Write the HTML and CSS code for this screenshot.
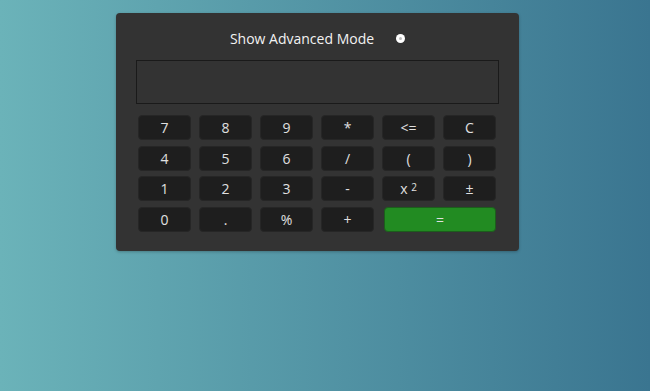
FILE: index.html
```html
<!DOCTYPE html>
<html lang="en">
<head>
  <meta charset="UTF-8">
  <meta name="viewport" content="width=device-width, initial-scale=1.0">
  <title>Calculator</title>
  <link rel="stylesheet" href="styles.css">
</head>
<body>

<div class="calculator">
  <div class="mode-row">
    <label for="advancedMode">Show Advanced Mode</label>
    <span id="advancedMode" class="toggle"></span>
  </div>

  <div class="display"></div>

  <div class="keys">
    <button class="key">7</button>
    <button class="key">8</button>
    <button class="key">9</button>
    <button class="key">*</button>
    <button class="key">&lt;=</button>
    <button class="key">C</button>

    <button class="key">4</button>
    <button class="key">5</button>
    <button class="key">6</button>
    <button class="key">/</button>
    <button class="key">(</button>
    <button class="key">)</button>

    <button class="key">1</button>
    <button class="key">2</button>
    <button class="key">3</button>
    <button class="key">-</button>
    <button class="key">x <sup>2</sup></button>
    <button class="key">±</button>

    <button class="key">0</button>
    <button class="key">.</button>
    <button class="key">%</button>
    <button class="key">+</button>
    <button class="key equals">=</button>
  </div>
</div>

</body>
</html>
```

FILE: styles.css
```css
body {
  font-family: "Open Sans", Arial, sans-serif;
  background: linear-gradient(to right, #6bb3b9, #3a7590);
  margin: 0;
  padding: 0;
  height: 391px;
  display: flex;
  flex-direction: column;
  align-items: center;
  color: #e6e6e6;
}

.calculator {
  width: 403px;
  box-sizing: border-box;
  margin-top: 13px;
  margin-left: -15px;
  background: #333333;
  border-radius: 4px;
  padding: 13px 20px 19px 20px;
  box-shadow: 0 1px 3px rgba(0, 0, 0, 0.25);
}

.mode-row {
  display: flex;
  justify-content: center;
  align-items: center;
  gap: 22px;
  height: 24px;
  font-size: 14px;
  color: #f2f2f2;
}

.toggle {
  width: 9px;
  height: 9px;
  border-radius: 50%;
  background: #fff;
  position: relative;
}

.toggle::after {
  content: "";
  position: absolute;
  left: 3px;
  top: 3px;
  width: 3px;
  height: 3px;
  border-radius: 50%;
  background: #bbb;
}

.display {
  margin-top: 10px;
  height: 42px;
  border: 1px solid #1a1a1a;
  background: #333333;
}

.keys {
  display: grid;
  grid-template-columns: repeat(6, 53px);
  grid-auto-rows: 25px;
  column-gap: 8px;
  row-gap: 5.5px;
  margin-top: 11px;
  padding-left: 2px;
}

.key {
  font-family: "Open Sans", Arial, sans-serif;
  font-size: 14px;
  color: #e0e0e0;
  background: #1e1e1e;
  border: 1px solid #262626;
  border-radius: 4px;
  padding: 0;
  cursor: pointer;
}

.key sup {
  font-size: 10px;
  vertical-align: 3px;
}

.key:hover {
  background: #2a2a2a;
}

.equals {
  grid-column: span 2;
  margin-left: 2px;
  background: #228b22;
  border-color: #1c5e1c;
}

.equals:hover {
  background: #2a9a2a;
}
```
